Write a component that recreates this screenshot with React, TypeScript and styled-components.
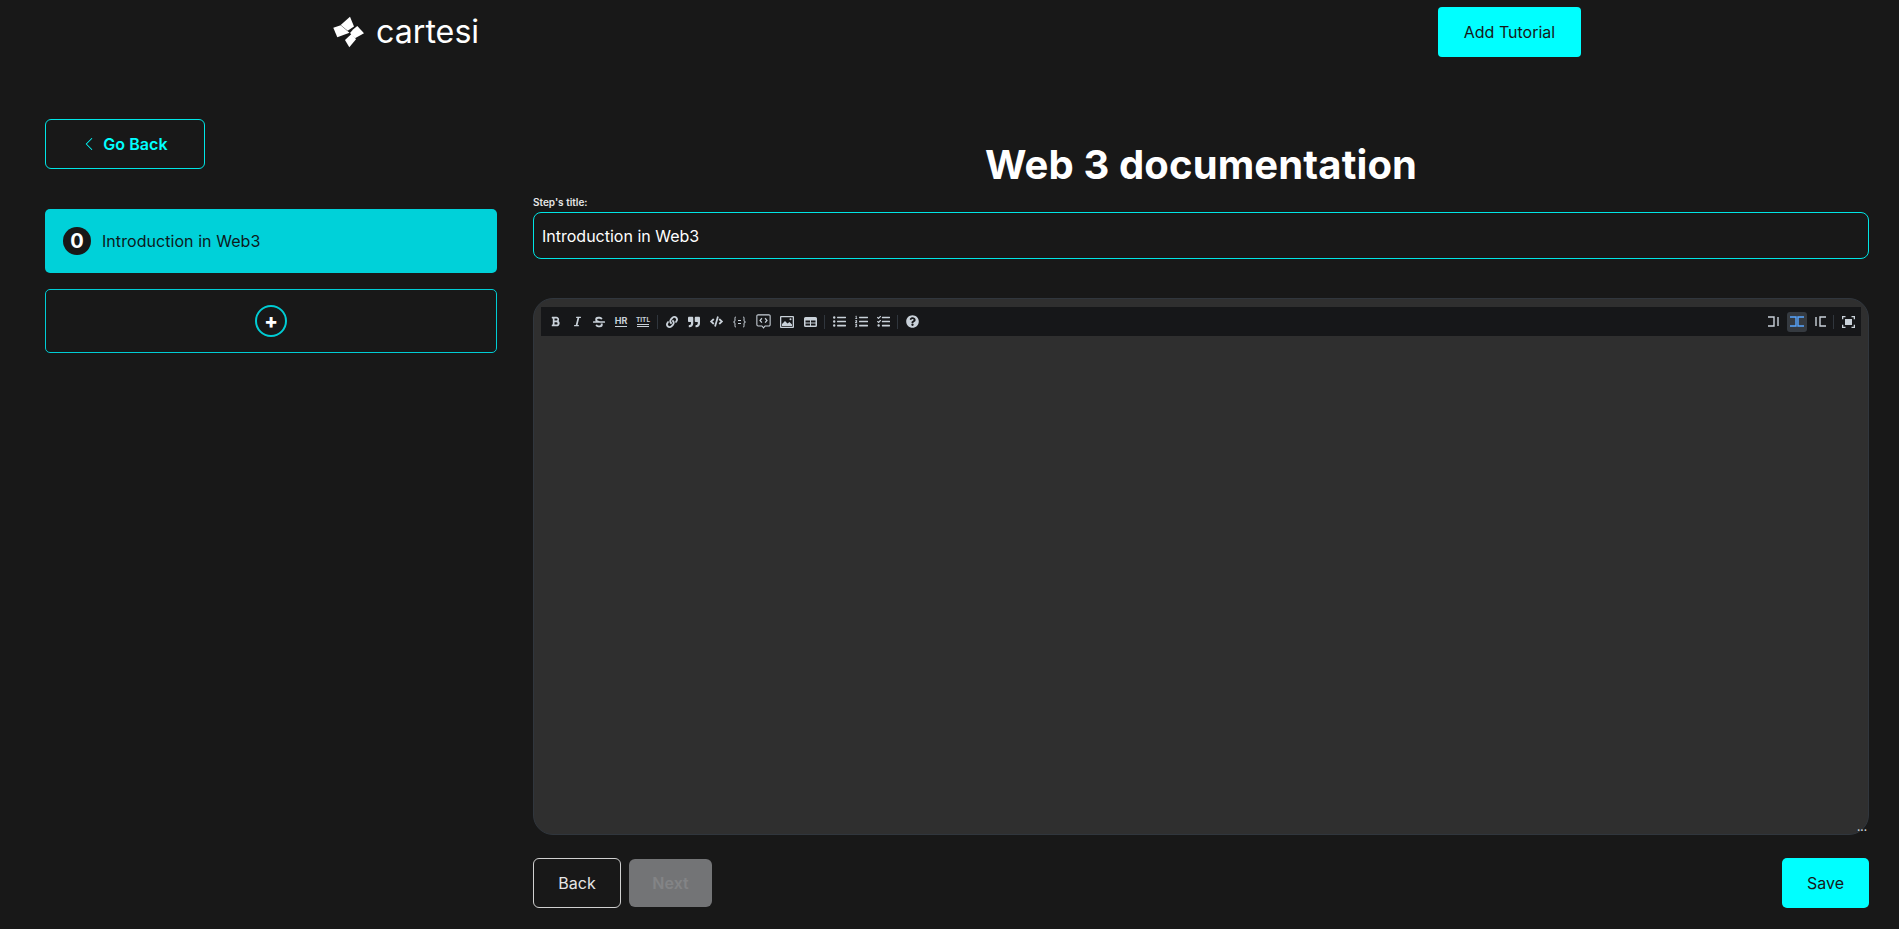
import styled, { createGlobalStyle } from "styled-components";
import {
  FaBold,
  FaItalic,
  FaStrikethrough,
  FaLink,
  FaQuoteRight,
  FaCode,
  FaListUl,
  FaListOl,
  FaTasks,
  FaQuestionCircle,
} from "react-icons/fa";
import { FiChevronLeft } from "react-icons/fi";

const GlobalStyle = createGlobalStyle`
  html, body {
    margin: 0;
    padding: 0;
    background: #181818;
    font-family: Inter, "Liberation Sans", sans-serif;
  }
  * {
    box-sizing: border-box;
  }
`;

const CartesiLogo = () => (
  <svg width="32" height="32" viewBox="5 4 32 32" fill="#fff">
    <polygon points="12.700,13 22,4.700 26,14.500 19.700,18.700" />
    <polygon points="5.300,15.700 12.700,13.300 21.500,20.700 9.300,25.300" />
    <polygon points="25.300,17.300 29.300,14 36,21.300 27,26.300 22,21" />
    <polygon points="17,28 23.700,21.800 28,27.300 21.300,35.300" />
  </svg>
);

const HrIcon = () => (
  <IconGlyph>
    HR
    <IconRule />
  </IconGlyph>
);

const TitleIcon = () => (
  <IconGlyph $small>
    TITL
    <IconRule />
    <IconRule />
  </IconGlyph>
);

const CodeBlockIcon = () => (
  <svg width="13" height="12" viewBox="0 0 13 12" fill="none" stroke="currentColor" strokeWidth="1">
    <path d="M3 1C1.500 1 2 2 2 4S1 6 .5 6C1 6 2 6 2 8s-.5 3 1 3" />
    <path d="M10 1c1.500 0 1 1 1 3s1 2 1.500 2C12 6 11 6 11 8s.5 3-1 3" />
    <path d="M5 4.500h3M5 7.500h3" />
  </svg>
);

const CommentIcon = () => (
  <svg width="15" height="15" viewBox="0 0 14 14" fill="none" stroke="currentColor">
    <path d="M2 .8h10a1.200 1.200 0 0 1 1.200 1.200v8a1.200 1.200 0 0 1-1.200 1.200H8.500L7 13l-1.500-1.800H2A1.200 1.200 0 0 1 .8 10V2A1.200 1.200 0 0 1 2 .8z" />
    <path d="M5.500 4 3.800 6l1.700 2M8.500 4l1.700 2-1.700 2" strokeWidth="1.200" />
  </svg>
);

const ImageIcon = () => (
  <svg width="14" height="12" viewBox="0 0 14 12" fill="currentColor">
    <path
      fillRule="evenodd"
      d="M1 0h12a1 1 0 0 1 1 1v10a1 1 0 0 1-1 1H1a1 1 0 0 1-1-1V1a1 1 0 0 1 1-1zm.3 1.300v9.400h11.400V1.300z"
    />
    <path d="M2 10V8l3-3 2.500 2.500L9.500 6 12 8.500V10z" />
    <circle cx="10.500" cy="3.300" r="1" />
  </svg>
);

const TableIcon = () => (
  <svg width="13" height="12" viewBox="0 0 13 12" fill="currentColor">
    <path
      fillRule="evenodd"
      d="M1.500 1h10A1.500 1.500 0 0 1 13 2.500v7a1.500 1.500 0 0 1-1.500 1.500h-10A1.500 1.500 0 0 1 0 9.500v-7A1.500 1.500 0 0 1 1.500 1zM1.500 4.500v2H6v-2zM7 4.500v2h4.500v-2zM1.500 7.500v2H6v-2zM7 7.500v2h4.500v-2z"
    />
  </svg>
);

const PreviewIcon = ({ left, right }: { left?: boolean; right?: boolean }) => (
  <svg width="14" height="11" viewBox="0 0 14 11" fill="none" stroke="currentColor" strokeWidth="1.400">
    {left && <path d="M0 1h6v9H0" />}
    {!left && <path d="M4 1v9" />}
    {right && <path d="M14 1H8v9h6" />}
    {!right && <path d="M10 1v9" />}
  </svg>
);

const FullscreenIcon = () => (
  <svg width="13" height="12" viewBox="0 0 13 12" fill="currentColor">
    <path d="M0 0h3.500v1.300H1.300v2H0zM9.500 0H13v3.300h-1.300v-2H9.500zM0 8.700h1.300v2h2.200V12H0zM11.700 8.700H13V12H9.500v-1.300h2.200z" />
    <rect x="3" y="3" width="7" height="6" />
  </svg>
);

const App = () => {
  return (
    <Page>
      <GlobalStyle />
      <Header>
        <Brand>
          <CartesiLogo />
          <BrandName>cartesi</BrandName>
        </Brand>
        <AddTutorial>Add Tutorial</AddTutorial>
      </Header>

      <Content>
        <Sidebar>
          <GoBack>
            <FiChevronLeft size={22} strokeWidth={1.100} />
            Go Back
          </GoBack>
          <StepList>
            <StepItem>
              <StepNumber>0</StepNumber>
              Introduction in Web3
            </StepItem>
            <AddStep>
              <AddStepCircle>+</AddStepCircle>
            </AddStep>
          </StepList>
        </Sidebar>

        <Main>
          <Title>Web 3 documentation</Title>
          <FieldLabel>Step's title:</FieldLabel>
          <TitleInput defaultValue="Introduction in Web3" />

          <Editor>
            <Toolbar>
              <ToolGroup>
                <ToolButton><FaBold size={11} /></ToolButton>
                <ToolButton><FaItalic size={11} /></ToolButton>
                <ToolButton><FaStrikethrough size={12} /></ToolButton>
                <ToolButton><HrIcon /></ToolButton>
                <ToolButton><TitleIcon /></ToolButton>
                <ToolDivider />
                <ToolButton><FaLink size={12} /></ToolButton>
                <ToolButton><FaQuoteRight size={12} /></ToolButton>
                <ToolButton><FaCode size={13} /></ToolButton>
                <ToolButton $wide><CodeBlockIcon /></ToolButton>
                <ToolButton $wide><CommentIcon /></ToolButton>
                <ToolButton $wide><ImageIcon /></ToolButton>
                <ToolButton><TableIcon /></ToolButton>
                <ToolDivider />
                <ToolButton><FaListUl size={13} /></ToolButton>
                <ToolButton><FaListOl size={13} /></ToolButton>
                <ToolButton><FaTasks size={13} /></ToolButton>
                <ToolDivider />
                <ToolButton><FaQuestionCircle size={13} /></ToolButton>
              </ToolGroup>
              <ToolGroup>
                <ToolButton><PreviewIcon left /></ToolButton>
                <ToolButton $active><PreviewIcon left right /></ToolButton>
                <ToolButton><PreviewIcon right /></ToolButton>
                <ToolDivider />
                <ToolButton><FullscreenIcon /></ToolButton>
              </ToolGroup>
            </Toolbar>
            <ResizeDots>...</ResizeDots>
          </Editor>

          <Actions>
            <ActionsLeft>
              <BackButton>Back</BackButton>
              <NextButton disabled>Next</NextButton>
            </ActionsLeft>
            <SaveButton>Save</SaveButton>
          </Actions>
        </Main>
      </Content>
    </Page>
  );
};

export default App;

const Page = styled.div`
  height: 929px;
  overflow: hidden;
  background: #181818;
  color: #fff;
`;

const Header = styled.header`
  display: flex;
  align-items: flex-start;
  justify-content: space-between;
  height: 119px;
  padding: 7px 318px 0 333px;
`;

const Brand = styled.div`
  display: flex;
  align-items: center;
  gap: 11px;
  margin-top: 9px;
`;

const BrandName = styled.span`
  font-size: 32.200px;
  line-height: 32px;
  font-weight: 400;
  color: #fff;
`;

const AddTutorial = styled.button`
  width: 143px;
  height: 50px;
  border: none;
  border-radius: 4px;
  background: #00ffff;
  color: #181818;
  font-family: inherit;
  font-size: 16px;
  font-weight: 400;
`;

const Content = styled.div`
  display: flex;
  gap: 36px;
  padding: 0 30px 0 45px;
`;

const Sidebar = styled.aside`
  flex: 0 0 452px;
  display: flex;
  flex-direction: column;
  gap: 40px;
`;

const GoBack = styled.button`
  display: flex;
  align-items: center;
  justify-content: center;
  gap: 3px;
  width: 160px;
  height: 50px;
  padding: 0 4px 0 0;
  border: 1px solid #00e5e5;
  border-radius: 6px;
  background: transparent;
  color: #00ffff;
  font-family: inherit;
  font-size: 16px;
  font-weight: 600;
  letter-spacing: 0.06px;
`;

const StepList = styled.div`
  display: flex;
  flex-direction: column;
  gap: 16px;
`;

const StepItem = styled.div`
  display: flex;
  align-items: center;
  gap: 11px;
  height: 64px;
  padding: 0 18px;
  border-radius: 5px;
  background: #00d1d9;
  color: #0d1a1c;
  font-size: 16px;
  letter-spacing: 0.06px;
`;

const StepNumber = styled.span`
  display: flex;
  align-items: center;
  justify-content: center;
  width: 28px;
  height: 28px;
  border-radius: 50%;
  background: #181818;
  color: #fff;
  font-size: 20px;
  font-weight: 700;
`;

const AddStep = styled.div`
  display: flex;
  align-items: center;
  justify-content: center;
  height: 64px;
  border: 1px solid #00ccd4;
  border-radius: 5px;
`;

const AddStepCircle = styled.span`
  display: flex;
  align-items: center;
  justify-content: center;
  width: 32px;
  height: 32px;
  border: 2px solid #00ccd4;
  border-radius: 50%;
  color: #fff;
  font-size: 20px;
  line-height: 20px;
  font-weight: 800;
`;

const Main = styled.main`
  flex: 1;
  display: flex;
  flex-direction: column;
`;

const Title = styled.h1`
  margin: 22px 0 0;
  text-align: center;
  font-size: 40px;
  line-height: 48px;
  font-weight: 700;
  letter-spacing: 0.13px;
  color: #fff;
`;

const FieldLabel = styled.label`
  margin-top: 7px;
  font-size: 10px;
  line-height: 12px;
  font-weight: 600;
  color: #e6e6e6;
`;

const TitleInput = styled.input`
  width: 100%;
  height: 47px;
  margin-top: 4px;
  padding: 0 8px;
  border: 1px solid #00e5e5;
  border-radius: 8px;
  outline: none;
  background: transparent;
  color: #fff;
  font-family: inherit;
  font-size: 16px;
`;

const Editor = styled.div`
  position: relative;
  height: 537px;
  margin-top: 39px;
  padding: 8px 7px 7px;
  border: 1px solid #30363d;
  border-radius: 20px;
  background: #2f2f2f;
`;

const Toolbar = styled.div`
  display: flex;
  align-items: center;
  justify-content: space-between;
  height: 29px;
  padding: 0 3px 0 4px;
  background: #161719;
`;

const ToolGroup = styled.div`
  display: flex;
  align-items: center;
  gap: 2px;
`;

const ToolButton = styled.span<{ $active?: boolean; $wide?: boolean }>`
  display: flex;
  align-items: center;
  justify-content: center;
  width: ${(p) => (p.$wide ? "22px" : "20px")};
  height: 20px;
  border-radius: 3px;
  background: ${(p) => (p.$active ? "#353a40" : "transparent")};
  color: ${(p) => (p.$active ? "#58a6ff" : "#c9d1d9")};
`;

const ToolDivider = styled.span`
  width: 1px;
  height: 14px;
  margin: 0 2px;
  background: #30363d;
`;

const IconGlyph = styled.span<{ $small?: boolean }>`
  display: flex;
  flex-direction: column;
  align-items: center;
  font-size: ${(p) => (p.$small ? "6.500px" : "9px")};
  line-height: ${(p) => (p.$small ? "6px" : "8px")};
  font-weight: 700;
`;

const IconRule = styled.span`
  display: block;
  width: 12px;
  height: 1px;
  margin-top: 1px;
  background: currentColor;
`;

const ResizeDots = styled.span`
  position: absolute;
  right: 1px;
  bottom: 3px;
  font-size: 10px;
  line-height: 8px;
  font-weight: 700;
  color: #c9d1d9;
`;

const Actions = styled.div`
  display: flex;
  align-items: center;
  justify-content: space-between;
  margin-top: 23px;
`;

const ActionsLeft = styled.div`
  display: flex;
  align-items: center;
  gap: 8px;
`;

const BackButton = styled.button`
  width: 88px;
  height: 50px;
  border: 1px solid #d0d0d0;
  border-radius: 6px;
  background: transparent;
  color: #e6e6e6;
  font-family: inherit;
  font-size: 16px;
  font-weight: 400;
`;

const NextButton = styled.button`
  width: 83px;
  height: 48px;
  border: none;
  border-radius: 6px;
  background: #737476;
  color: #838486;
  font-family: inherit;
  font-size: 16px;
  font-weight: 600;
`;

const SaveButton = styled.button`
  width: 87px;
  height: 50px;
  border: none;
  border-radius: 5px;
  background: #00ffff;
  color: #181818;
  font-family: inherit;
  font-size: 16px;
  font-weight: 400;
`;
